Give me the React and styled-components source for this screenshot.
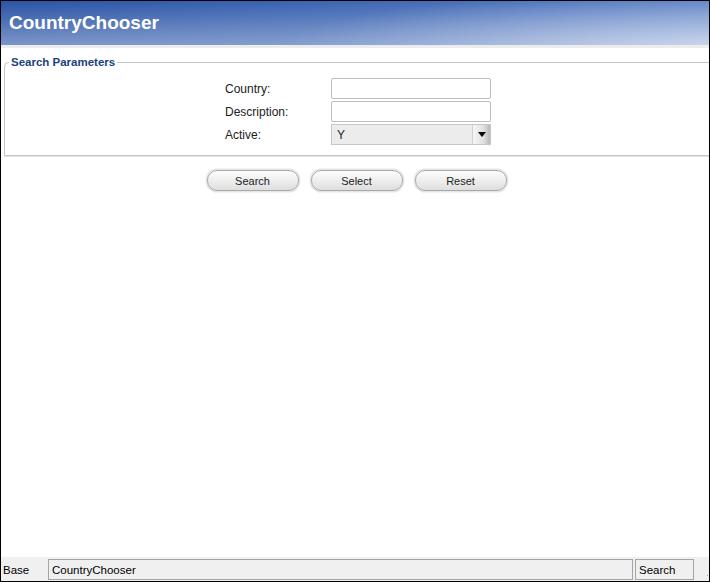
import React from "react";
import styled, { createGlobalStyle } from "styled-components";

const GlobalStyle = createGlobalStyle`
  body {
    margin: 0;
    background: #fff;
    font-family: "Liberation Sans", Arial, sans-serif;
  }
`;

const App = () => {
  return (
    <>
      <GlobalStyle />
      <Window>
        <Header>CountryChooser</Header>
        <HeaderStrip />
        <Content>
          <Fieldset>
            <Legend>Search Parameters</Legend>
            <FormGrid>
              <Label>Country:</Label>
              <TextInput type="text" />
              <Label>Description:</Label>
              <TextInput type="text" />
              <Label>Active:</Label>
              <Select>
                <SelectValue>Y</SelectValue>
                <SelectArrow>
                  <svg width="8" height="5" viewBox="0 0 8 5">
                    <path d="M0 0 H8 L4 5 Z" fill="#000" />
                  </svg>
                </SelectArrow>
              </Select>
            </FormGrid>
          </Fieldset>
          <ButtonRow>
            <PillButton>Search</PillButton>
            <PillButton>Select</PillButton>
            <PillButton>Reset</PillButton>
          </ButtonRow>
        </Content>
        <StatusBar>
          <StatusLabel>Base</StatusLabel>
          <StatusField grow>CountryChooser</StatusField>
          <StatusField width="59px">Search</StatusField>
          <Grip />
        </StatusBar>
      </Window>
    </>
  );
};

export default App;

const Window = styled.div`
  width: 710px;
  height: 582px;
  box-sizing: border-box;
  border: 1px solid #000;
  display: flex;
  flex-direction: column;
  background: #fff;
  overflow: hidden;
`;

const Header = styled.div`
  height: 44px;
  flex-shrink: 0;
  display: flex;
  align-items: center;
  padding-left: 8px;
  padding-bottom: 1px;
  box-sizing: border-box;
  color: #fff;
  font-size: 19px;
  font-weight: bold;
  background:
    radial-gradient(ellipse 60% 120% at 100% 100%, rgba(255, 255, 255, 0.45), rgba(255, 255, 255, 0) 100%),
    linear-gradient(180deg, rgba(255, 255, 255, 0) 0%, rgba(255, 255, 255, 0.38) 100%),
    linear-gradient(90deg, #2a54a5 0%, #3e66b3 50%, #5b80c5 100%);
`;

const HeaderStrip = styled.div`
  height: 3px;
  flex-shrink: 0;
  background: #ececec;
`;

const Content = styled.div`
  flex: 1;
  padding: 7px 0 0 3px;
`;

const Fieldset = styled.fieldset`
  margin: 0;
  padding: 9px 0 10px 0;
  border: 1px solid #c4c4c4;
  border-right: none;
  border-radius: 5px 0 0 0;
  box-shadow: 0 1px 0 #e6e6e6;
`;

const Legend = styled.legend`
  margin-left: 4px;
  padding: 0 2px;
  font-size: 11.5px;
  font-weight: bold;
  line-height: 14px;
  color: #1c3f80;
`;

const FormGrid = styled.div`
  display: grid;
  grid-template-columns: 106px 160px;
  grid-auto-rows: 21px;
  row-gap: 2px;
  justify-content: center;
  padding-left: 2px;
`;

const Label = styled.label`
  display: flex;
  align-items: center;
  font-size: 12px;
  color: #222;
`;

const TextInput = styled.input`
  box-sizing: border-box;
  width: 160px;
  height: 21px;
  margin: 0;
  border: 1px solid #bdbdbd;
  border-radius: 2px;
  background: #fff;
  outline: none;
`;

const Select = styled.div`
  box-sizing: border-box;
  width: 160px;
  height: 21px;
  display: flex;
  align-items: stretch;
  border: 1px solid #c6c6c6;
  background: #ececec;
`;

const SelectValue = styled.div`
  flex: 1;
  display: flex;
  align-items: center;
  padding-left: 5px;
  font-size: 12px;
  color: #222;
`;

const SelectArrow = styled.div`
  width: 17px;
  display: flex;
  align-items: center;
  justify-content: center;
  border-left: 1px solid #d0d0d0;
  background: linear-gradient(90deg, #f6f6f6 0%, #e2e2e2 60%, #b8b8b8 100%);
  padding-bottom: 1px;
`;

const ButtonRow = styled.div`
  display: flex;
  justify-content: center;
  gap: 12px;
  margin-top: 14px;
`;

const PillButton = styled.button`
  box-sizing: border-box;
  width: 92px;
  height: 21px;
  padding: 0;
  border: 1px solid #a9a9a9;
  border-radius: 10px;
  background: linear-gradient(180deg, #fdfdfd 0%, #eeeeee 50%, #dedede 100%);
  box-shadow: 0 0 0 1.5px #e6e6e6;
  font-family: "Liberation Sans", Arial, sans-serif;
  font-size: 11px;
  color: #222;
  cursor: pointer;
`;

const StatusBar = styled.div`
  height: 24px;
  flex-shrink: 0;
  display: flex;
  align-items: stretch;
  padding: 2px 0 1px 2px;
  box-sizing: border-box;
  background: #f0f0f0;
  font-size: 11.5px;
  color: #000;
`;

const StatusLabel = styled.div`
  width: 45px;
  display: flex;
  align-items: center;
`;

const StatusField = styled.div`
  box-sizing: border-box;
  flex: ${(p) => (p.grow ? "1" : "none")};
  width: ${(p) => p.width || "auto"};
  display: flex;
  align-items: center;
  padding-left: 3px;
  margin-right: 2px;
  border: 1px solid #a5a5a5;
`;

const Grip = styled.div`
  width: 13px;
  background-image: radial-gradient(#a0a0a0 0.7px, transparent 1px);
  background-size: 3px 3px;
  background-position: 10px 15px;
  background-repeat: no-repeat;
`;
